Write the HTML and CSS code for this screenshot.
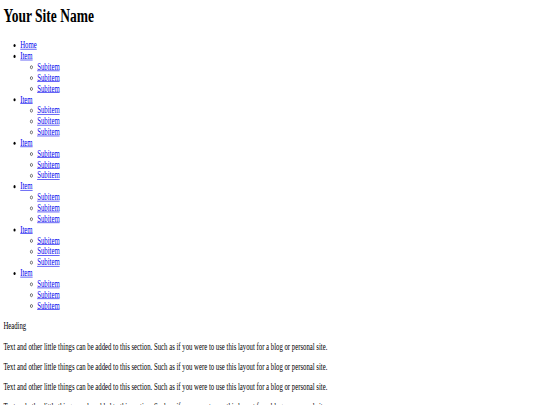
FILE: index.html
```html
<!DOCTYPE html>
<html lang="en">
<head>
<meta charset="utf-8">
<title>Your Site Name</title>
<link rel="stylesheet" href="styles.css">
</head>
<body>
<div class="page">
  <h1 class="site-name">Your Site Name</h1>
  <ul class="nav">
    <li><a href="#">Home</a></li>
    <li><a href="#">Item</a>
      <ul><li><a href="#">Subitem</a></li><li><a href="#">Subitem</a></li><li><a href="#">Subitem</a></li></ul>
    </li>
    <li><a href="#">Item</a>
      <ul><li><a href="#">Subitem</a></li><li><a href="#">Subitem</a></li><li><a href="#">Subitem</a></li></ul>
    </li>
    <li><a href="#">Item</a>
      <ul><li><a href="#">Subitem</a></li><li><a href="#">Subitem</a></li><li><a href="#">Subitem</a></li></ul>
    </li>
    <li><a href="#">Item</a>
      <ul><li><a href="#">Subitem</a></li><li><a href="#">Subitem</a></li><li><a href="#">Subitem</a></li></ul>
    </li>
    <li><a href="#">Item</a>
      <ul><li><a href="#">Subitem</a></li><li><a href="#">Subitem</a></li><li><a href="#">Subitem</a></li></ul>
    </li>
    <li><a href="#">Item</a>
      <ul><li><a href="#">Subitem</a></li><li><a href="#">Subitem</a></li><li><a href="#">Subitem</a></li></ul>
    </li>
  </ul>
  <div class="heading">Heading</div>
  <p class="text">Text and other little things can be added to this section. Such as if you were to use this layout for a blog or personal site.</p>
  <p class="text">Text and other little things can be added to this section. Such as if you were to use this layout for a blog or personal site.</p>
  <p class="text">Text and other little things can be added to this section. Such as if you were to use this layout for a blog or personal site.</p>
  <p class="text">Text and other little things can be added to this section. Such as if you were to use this layout for a blog or personal site.</p>
</div>
</body>
</html>
```
FILE: styles.css
```css
html, body {
  margin: 0;
  padding: 0;
  overflow: hidden;
  width: 540px;
  height: 405px;
  background: #ffffff;
}

.page {
  width: 1264px;
  padding: 8px;
  font-family: "Liberation Serif", "Times New Roman", serif;
  font-size: 16px;
  color: #000000;
  transform: scale(0.421875, 0.603);
  transform-origin: 0 0;
}

.site-name {
  font-size: 32px;
  font-weight: bold;
  margin: 0 0 21.44px;
}

.nav {
  margin: 16px 0;
  padding-left: 40px;
  list-style: disc;
}

.nav ul {
  margin: 0;
  padding-left: 40px;
  list-style: circle;
}

.nav a {
  color: #0000ee;
  text-decoration: underline;
}

.heading {
  margin: 0;
}

.text {
  margin: 15.5px 0;
}
```
